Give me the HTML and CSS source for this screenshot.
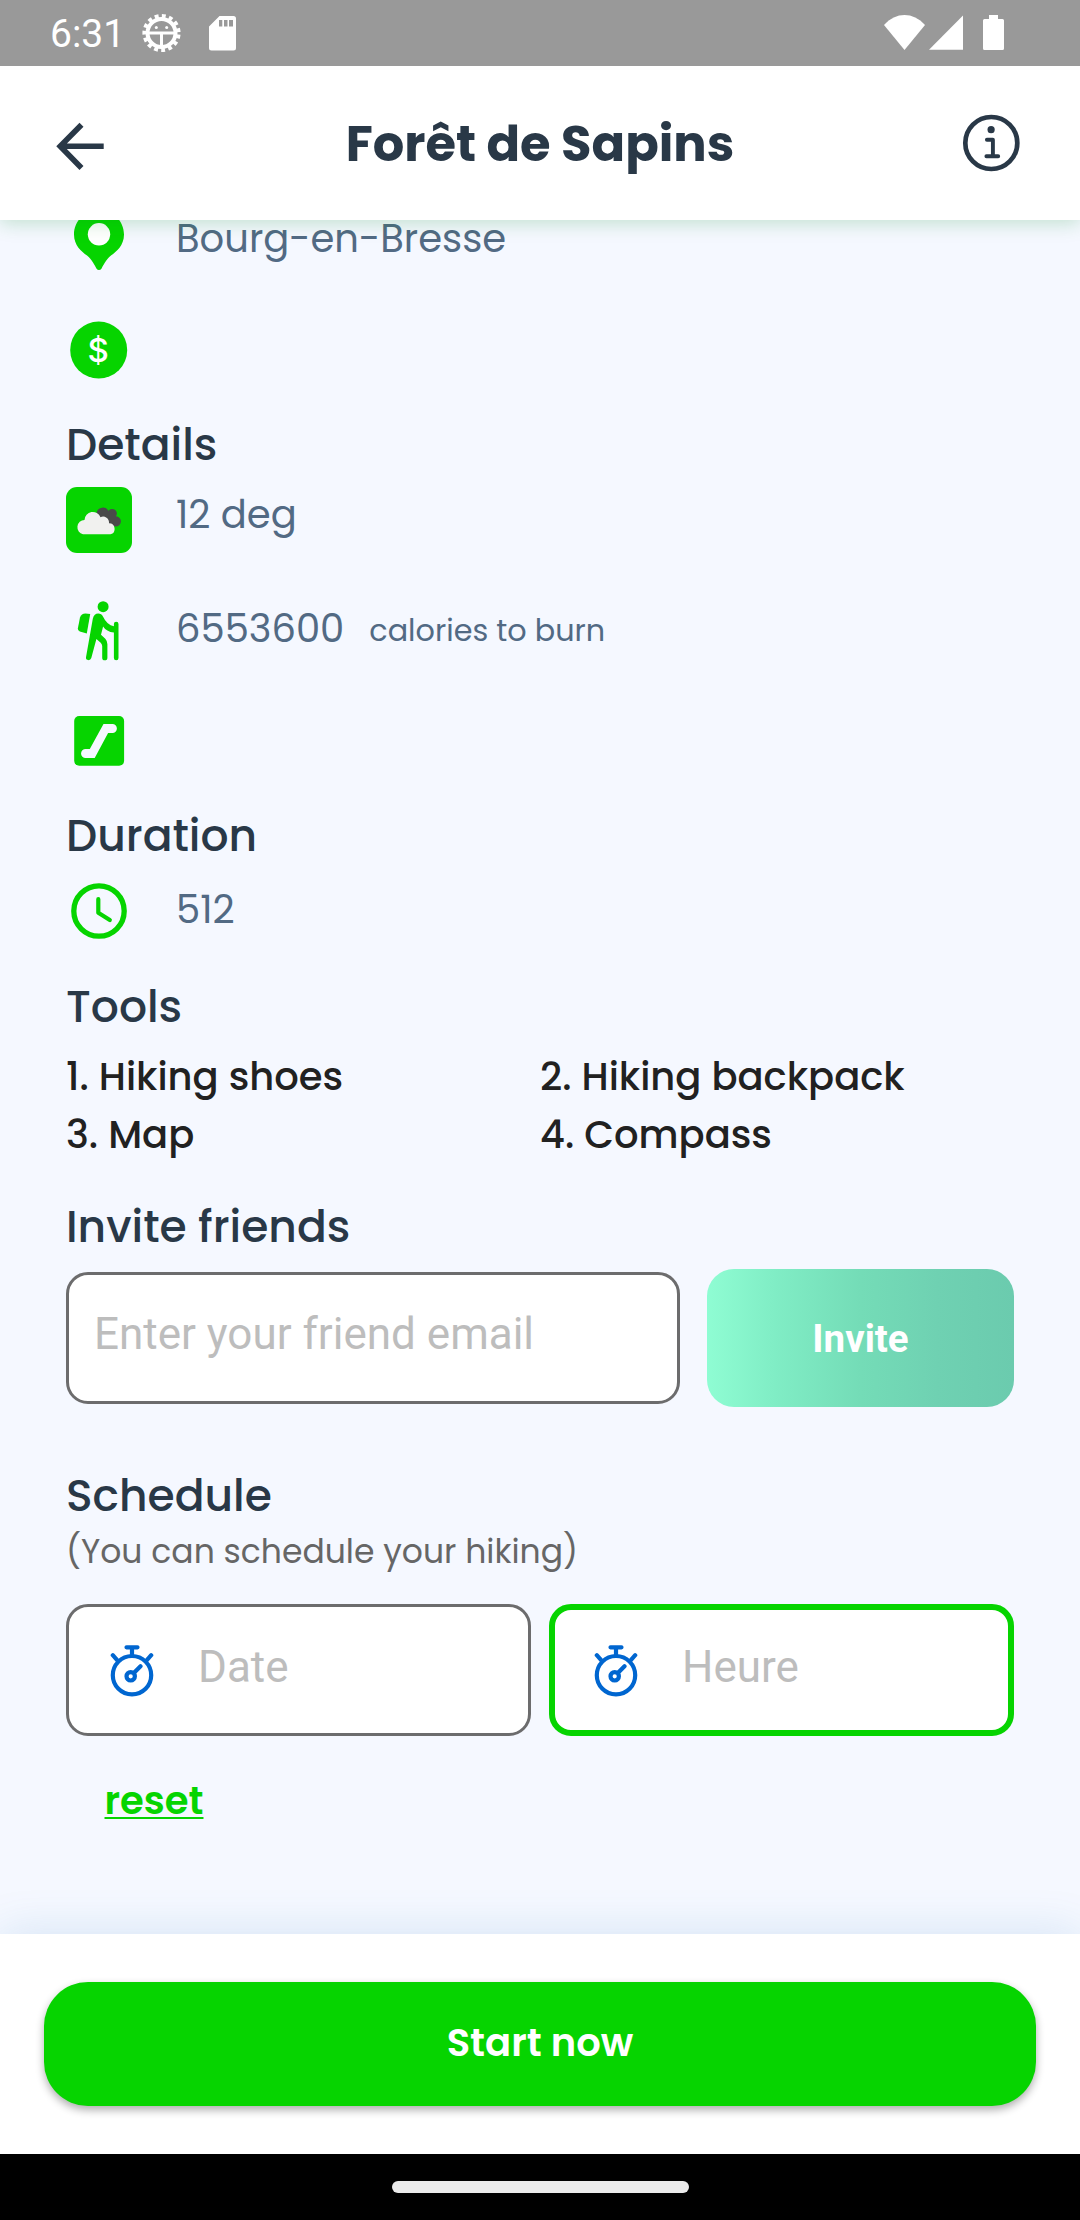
FILE: index.html
```html
<!DOCTYPE html>
<html lang="fr">
<head>
<meta charset="utf-8">
<title>Forêt de Sapins</title>
<link rel="stylesheet" href="styles.css">
</head>
<body>
<div class="screen">
  <div class="statusbar">
    <span class="clock">6:31</span>
    <svg class="status-debug" width="42" height="42" viewBox="0 0 42 42" fill="none" stroke="#fff">
      <circle cx="21.500" cy="21" r="14" stroke-width="4"/>
      <circle cx="21.500" cy="21" r="16.800" stroke-width="4.600" stroke-dasharray="3.800 3.237" stroke-dashoffset="-1.600"/>
      <path d="M8 21H35M21.500 21V34" stroke-width="3"/>
      <circle cx="16.300" cy="15.400" r="1.500" fill="#fff" stroke="none"/>
      <circle cx="26.700" cy="15.400" r="1.500" fill="#fff" stroke="none"/>
    </svg>
    <svg class="status-sd" width="28" height="36" viewBox="0 0 28 36">
      <path fill="#fff" fill-rule="evenodd" d="M10.500 0H24.500Q27 0 27 2.500V32Q27 34.500 24.500 34.500H2.500Q0 34.500 0 32V10.500ZM10 4V10.500H13.300V4ZM15 4V10.500H18.500V4ZM20 4V10.500H24V4Z"/>
    </svg>
    <div class="status-right">
      <svg width="42" height="36" viewBox="0 0 42 36"><path fill="#fff" d="M0 10C12-3.300 29-3.300 41 10L20.500 35Z"/></svg>
      <svg width="35" height="36" viewBox="0 0 35 36"><path fill="#fff" d="M34 .5V34.700H0Z"/></svg>
      <svg class="battery" width="21" height="36" viewBox="0 0 21 36"><path fill="#fff" d="M6 0H15V4H19.500Q21 4 21 5.500V33.500Q21 35 19.500 35H1.500Q0 35 0 33.500V5.500Q0 4 1.500 4H6Z"/></svg>
    </div>
  </div>

  <header class="appbar">
    <svg width="60" height="60" viewBox="0 0 60 60" fill="none" stroke="#293847" stroke-width="5.600">
      <path d="M35.500 11.700L14.200 33.300L35.500 55M14.200 33.300H57.700"/>
    </svg>
    <h1>Forêt de Sapins</h1>
    <svg width="60" height="60" viewBox="0 0 60 60" fill="none" stroke="#293847" stroke-linecap="round" stroke-linejoin="round">
      <circle cx="30.300" cy="30" r="26" stroke-width="4.700"/>
      <circle cx="30.100" cy="16.700" r="3.600" fill="#293847" stroke="none"/>
      <path stroke-width="3.900" d="M25.900 26.800H31.900V43M25.400 43.200H37.200"/>
    </svg>
  </header>

  <main class="content">
    <div class="row row-place">
      <svg class="icon" viewBox="0 0 66 66"><path fill="#06d400" d="M33 5.500C47 5.500 58 17 58 30.500C58 41.500 50.500 47.500 45 51.500C40 55.500 37.500 61 35.600 64.500Q34.500 66 33 66T30.400 64.500C28.500 61 26 55.500 21 51.500C15.500 47.500 8 41.500 8 30.500C8 17 19 5.500 33 5.500Z"/><circle cx="33" cy="30.300" r="11.200" fill="#fff"/></svg>
      <span class="value">Bourg-en-Bresse</span>
    </div>
    <div class="row row-price">
      <svg class="icon" viewBox="0 0 66 66"><circle cx="32.700" cy="33" r="28.500" fill="#06d400"/><text class="dollar" x="32.200" y="45" text-anchor="middle">$</text></svg>
    </div>

    <h2 class="h-details">Details</h2>
    <div class="row row-weather">
      <svg class="icon weather" viewBox="0 0 66 66">
        <path fill="#4a4a4a" d="M30.500 25.500A6.600 6.600 0 0 1 42.500 23.800A4.200 4.200 0 0 1 50 29.200A5.100 5.100 0 1 1 49.500 39.500L36 36Z"/>
        <path fill="#f1f1ef" d="M17 47.300A7.300 7.300 0 0 1 18.500 32.900A8.300 8.300 0 0 1 34.500 30.200A6 6 0 0 1 43 36.300A5.600 5.600 0 0 1 44.500 47.300Z"/>
      </svg>
      <span class="value">12 deg</span>
    </div>
    <div class="row row-calories">
      <svg class="icon" viewBox="0 -.7 66 66" fill="#06d400">
        <circle cx="37.100" cy="9" r="5.500"/>
        <path d="M24.200 16.400L20.800 35.900L13.800 33.900Q11.500 33 11.900 30.500L14 19.800Q15.300 15.800 19.500 15.800Z"/>
        <path d="M26.800 21Q28.200 15.900 32.200 15.900Q35.500 15.900 37.100 19Q41 27.300 47.900 28.600V26.300A2.300 2.300 0 0 1 52.500 26.300V60.300A2.300 2.300 0 0 1 47.900 60.300V34.900Q40.300 34 37.100 28.800L35 37L39.300 41Q41.400 43.300 41.400 46.500V60A2.600 2.600 0 0 1 36.200 60V48.300Q36 46.300 34.700 45.100L30.400 41.300L25.300 60.300Q24.500 62.700 22.200 62.400Q19.600 62 20 59.500Z"/>
      </svg>
      <span class="value">6553600</span>
      <span class="unit">calories to burn</span>
    </div>
    <div class="row row-slope">
      <svg class="icon" viewBox="0 0 66 66"><rect x="8.200" y="8" width="49.900" height="49.700" rx="5" fill="#06d400"/><path fill="#f5f8ff" d="M19.600 40.900H23.800L37.500 16H46.400A4.500 4.500 0 0 1 46.400 25H42.100L28.700 50H19.600A4.500 4.500 0 0 1 19.600 40.900Z"/></svg>
    </div>

    <h2 class="h-duration">Duration</h2>
    <div class="row row-duration">
      <svg class="icon" viewBox="0 0 66 66" fill="none" stroke="#06d400" stroke-linecap="round" stroke-linejoin="round"><circle cx="33" cy="33" r="25.200" stroke-width="5.300"/><path stroke-width="4.200" d="M32.300 21.200V34.700L43.800 42"/></svg>
      <span class="value">512</span>
    </div>

    <h2 class="h-tools">Tools</h2>
    <div class="tools">
      <span>1. Hiking shoes</span><span>2. Hiking backpack</span>
      <span>3. Map</span><span>4. Compass</span>
    </div>

    <h2 class="h-invite">Invite friends</h2>
    <div class="invite">
      <div class="field field-email"><span class="placeholder">Enter your friend email</span></div>
      <div class="invite-btn">Invite</div>
    </div>

    <h2 class="h-schedule">Schedule</h2>
    <p class="hint">(You can schedule your hiking)</p>
    <div class="schedule">
      <div class="field field-time">
        <svg class="stopwatch" width="44" height="54" viewBox="0 0 44 54" fill="none" stroke="#0066d0" stroke-width="4.200" stroke-linecap="round"><circle cx="22" cy="31.200" r="19.200"/><path d="M16.500 3.300H27.500M22 4V11M2.800 11.200L7.800 16.800M41.200 11.200L36.200 16.800M24.300 28.500L30.500 22.300"/><circle cx="20.700" cy="32.300" r="4.200"/></svg>
        <span class="placeholder">Date</span>
      </div>
      <div class="field field-time active">
        <svg class="stopwatch" width="44" height="54" viewBox="0 0 44 54" fill="none" stroke="#0066d0" stroke-width="4.200" stroke-linecap="round"><circle cx="22" cy="31.200" r="19.200"/><path d="M16.500 3.300H27.500M22 4V11M2.800 11.200L7.800 16.800M41.200 11.200L36.200 16.800M24.300 28.500L30.500 22.300"/><circle cx="20.700" cy="32.300" r="4.200"/></svg>
        <span class="placeholder">Heure</span>
      </div>
    </div>
    <a class="reset">reset</a>
  </main>

  <footer class="footer">
    <div class="start">Start now</div>
  </footer>
  <div class="navbar"><div class="pill"></div></div>
</div>
</body>
</html>
```
FILE: styles.css
```css
* { box-sizing: border-box; }
body { margin: 0; font-family: Poppins, Inter, sans-serif; }
svg { display: block; flex: none; }
h1, h2, p { margin: 0; }

.screen {
  width: 1080px;
  height: 2220px;
  display: flex;
  flex-direction: column;
  overflow: hidden;
  background: #f5f8ff;
}

.statusbar {
  height: 66px;
  flex: none;
  display: flex;
  align-items: flex-start;
  padding: 0 76px 0 50px;
  background: #999;
  position: relative;
  z-index: 2;
}
.clock {
  width: 90px;
  margin-top: 11px;
  font: 400 39px/47px Roboto, sans-serif;
  color: #fff;
}
.status-debug { margin-top: 12px; }
.status-sd { margin: 16px 0 0 27px; }
.status-right { display: flex; gap: 3px; margin: 15px 0 0 auto; }
.battery { margin-left: 16px; }

.appbar {
  height: 154px;
  flex: none;
  display: flex;
  align-items: center;
  justify-content: space-between;
  padding: 0 59px 0 46px;
  background: #fff;
  box-shadow: 0 3px 18px rgba(0, 140, 30, .22);
  position: relative;
  z-index: 1;
}
.appbar h1 {
  margin: 2px 0 0 13px;
  font-size: 49.5px;
  line-height: 74px;
  font-weight: 700;
  color: #293847;
}

.content {
  flex: 1;
  min-height: 0;
  padding: 0 66px;
}
.content h2 {
  font-size: 44px;
  line-height: 60px;
  font-weight: 500;
  color: #293847;
}
.row {
  height: 66px;
  display: flex;
  align-items: flex-start;
}
.icon { width: 66px; height: 66px; margin-right: 44px; }
.value {
  font-size: 38.5px;
  line-height: 56px;
  color: #526a84;
}
.unit {
  margin-left: 25px;
  font-size: 30.25px;
  line-height: 56px;
  color: #526a84;
}
.row-place { margin-top: -16px; }
.row-place .value { margin-top: 7px; }
.row-price { margin-top: 47px; }
.dollar { font: 500 33px Inter, sans-serif; fill: #fff; }
.h-details { margin-top: 32px; }
.row-weather { margin-top: 12px; }
.weather { background: #06d400; border-radius: 11px; }
.row-calories { margin-top: 44px; }
.row-calories .value { margin-top: 4px; }
.row-calories .unit { margin-top: 6px; }
.row-slope { margin-top: 45px; }
.h-duration { margin-top: 32px; }
.row-duration { margin-top: 12px; }
.row-duration .value { margin-top: 4px; }
.h-tools { margin-top: 33px; }
.tools {
  display: grid;
  grid-template-columns: 1fr 1fr;
  margin-top: 11px;
  font-size: 38.5px;
  line-height: 58px;
  font-weight: 500;
  color: #212121;
}
.h-invite { margin-top: 33px; }
.invite {
  display: flex;
  align-items: center;
  gap: 27px;
  margin-top: 12px;
}
.field {
  height: 132px;
  display: flex;
  align-items: flex-start;
  background: #fff;
  border: 3px solid #6c6c6d;
  border-radius: 22px;
}
.placeholder {
  font: 400 44px/52px Roboto, sans-serif;
  color: #bdbdbd;
}
.field-email { flex: 1; padding: 33px 0 0 25px; }
.invite-btn {
  width: 307px;
  height: 138px;
  border-radius: 27px;
  background: linear-gradient(90deg, #8ffdd3 0%, #80edc5 22%, #74dcb7 50%, #6fd1b2 75%, #6bcbae 100%);
  font: 700 38.5px/139px Roboto, sans-serif;
  text-align: center;
  color: #fff;
}
.h-schedule { margin-top: 59px; }
.hint { font-size: 33px; line-height: 52px; color: #666; }
.schedule {
  display: grid;
  grid-template-columns: 465px 465px;
  justify-content: space-between;
  margin-top: 26px;
}
.field-time { padding: 34px 0 0 41px; }
.field-time .stopwatch { margin-top: 3px; }
.field-time .placeholder { margin-left: 44px; }
.field-time.active {
  border: 6px solid #06d400;
  padding: 31px 0 0 39px;
}
.reset {
  display: inline-block;
  margin: 37px 0 0 38.5px;
  font-size: 38.5px;
  line-height: 56px;
  font-weight: 600;
  color: #06d400;
  text-decoration: underline;
  text-decoration-thickness: 2px;
  text-underline-offset: 3px;
  text-decoration-skip-ink: none;
}

.footer {
  height: 220px;
  flex: none;
  padding: 48px 44px;
  background: #fff;
  box-shadow: 0 0 44px rgba(20, 110, 180, .15);
  position: relative;
}
.start {
  height: 124px;
  padding-bottom: 3px;
  border-radius: 44px;
  background: #06d400;
  box-shadow: 0 4px 8px rgba(0, 0, 0, .32);
  font-size: 38.5px;
  line-height: 121px;
  font-weight: 600;
  text-align: center;
  color: #fff;
}
.navbar {
  height: 66px;
  flex: none;
  display: flex;
  justify-content: center;
  padding-top: 27px;
  background: #000;
  position: relative;
}
.pill { width: 297px; height: 12px; border-radius: 6px; background: #ebebeb; }
```
